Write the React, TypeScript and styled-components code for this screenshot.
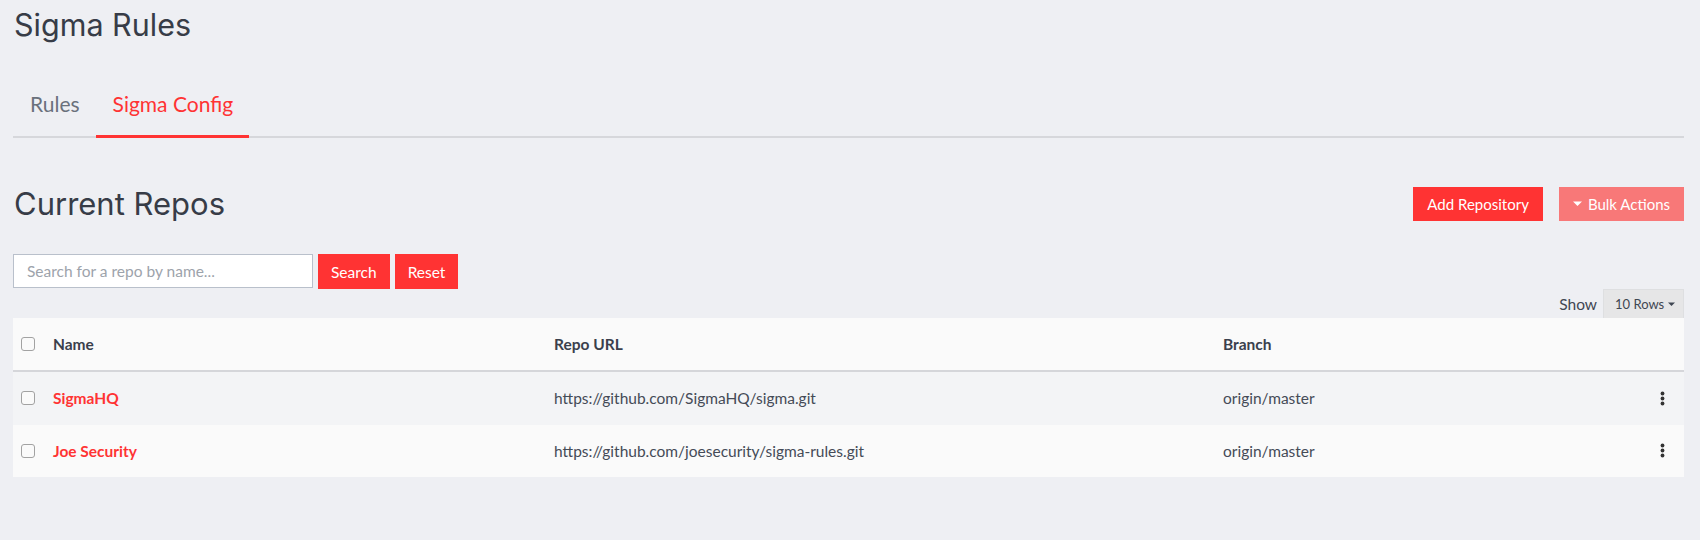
import React from "react";
import styled, { createGlobalStyle } from "styled-components";

const GlobalStyle = createGlobalStyle`
  html, body { margin: 0; padding: 0; background: #eeeff3; }
  body { font-family: "Lato", "Liberation Sans", sans-serif; color: #3f4652; }
  * { box-sizing: border-box; }
`;

const RED = "#ff3333";

const Page = styled.div`
  padding: 7px 16px 40px 13px;
`;

const Title = styled.h1`
  margin: 0;
  font-family: "Inter", "Liberation Sans", sans-serif;
  font-weight: 400;
  font-size: 30.5px;
  line-height: 36px;
  color: #373c47;
  padding-left: 1px;
`;

const TabBar = styled.nav`
  display: flex;
  margin-top: 33px;
  border-bottom: 2px solid #d6d7db;
`;

const Tab = styled.a<{ $active?: boolean }>`
  display: block;
  padding: 16px 16px 19px 17px;
  margin-bottom: -2px;
  font-size: 21px;
  line-height: 24px;
  color: ${(p) => (p.$active ? RED : "#6a717c")};
  border-bottom: 3px solid ${(p) => (p.$active ? RED : "transparent")};
  cursor: pointer;
`;

const SectionHead = styled.div`
  display: flex;
  align-items: center;
  margin-top: 49px;
  height: 34px;
`;

const SectionTitle = styled.h2`
  margin: 0;
  flex: 1;
  font-family: "Inter", "Liberation Sans", sans-serif;
  font-weight: 400;
  font-size: 31px;
  line-height: 34px;
  color: #373c47;
  padding-left: 1px;
`;

const Actions = styled.div`
  display: flex;
  gap: 16px;
`;

const Button = styled.button<{ $muted?: boolean }>`
  display: inline-flex;
  align-items: center;
  justify-content: center;
  gap: 6px;
  height: 34px;
  padding: 0 14px;
  border: none;
  border-radius: 0;
  background: ${(p) => (p.$muted ? "#f87878" : RED)};
  color: #fff;
  font-family: "Lato", "Liberation Sans", sans-serif;
  font-size: 15px;
  cursor: pointer;
`;

const SearchRow = styled.div`
  display: flex;
  align-items: flex-start;
  gap: 5px;
  margin-top: 33px;
`;

const SearchInput = styled.input`
  width: 300px;
  height: 34px;
  padding: 0 13px;
  border: 1px solid #b9c0cb;
  border-radius: 0;
  background: #fff;
  font-family: "Lato", "Liberation Sans", sans-serif;
  font-size: 15.5px;
  color: #3f4652;
  outline: none;
  &::placeholder { color: #9da3ab; }
`;

const SearchButton = styled(Button)`
  height: 35px;
  font-size: 15.5px;
  padding: 0 13px;
`;

const ShowRow = styled.div`
  display: flex;
  justify-content: flex-end;
  align-items: center;
  gap: 6px;
  height: 29px;
`;

const ShowLabel = styled.span`
  font-size: 15.5px;
  color: #3f4652;
`;

const RowsSelect = styled.div`
  display: inline-flex;
  align-items: center;
  gap: 4px;
  width: 81px;
  height: 29px;
  padding-left: 11px;
  background: #e6e6e7;
  border: 1px solid #dedfe1;
  border-bottom: none;
  font-size: 13px;
  color: #3f4652;
`;

const Table = styled.div`
  display: grid;
  grid-template-columns: 40px 501px 669px 1fr 44px;
`;

const HeadRow = styled.div`
  display: contents;
  & > div {
    height: 54px;
    background: #fafafa;
    border-bottom: 2px solid #d5d6da;
    font-weight: 700;
    color: #3a404c;
  }
`;

const BodyRow = styled.div<{ $stripe?: boolean }>`
  display: contents;
  & > div {
    height: 52.5px;
    background: ${(p) => (p.$stripe ? "#f3f4f6" : "#fafafa")};
  }
`;

const Cell = styled.div`
  display: flex;
  align-items: center;
  font-size: 15.5px;
  color: #454b57;
  white-space: nowrap;
`;

const CheckCell = styled(Cell)`
  padding-left: 8px;
`;

const MenuCell = styled(Cell)`
  justify-content: center;
  color: #333;
`;

const Check = styled.span`
  display: inline-block;
  width: 14px;
  height: 14px;
  border: 1.5px solid #a2a2a2;
  border-radius: 3px;
  background: #fafafa;
`;

const RepoName = styled.a`
  color: ${RED};
  font-weight: 700;
  cursor: pointer;
`;

const Caret = ({ color, w = 9 }: { color: string; w?: number }) => (
  <svg width={w} height={w / 2 + 1} viewBox="0 0 10 6" aria-hidden>
    <path d="M0 0.5 L10 0.5 L5 5.5 Z" fill={color} />
  </svg>
);

const Kebab = () => (
  <svg width="5" height="15" viewBox="0 0 5 15" aria-hidden>
    <circle cx="2.5" cy="2.5" r="1.9" fill="#333" />
    <circle cx="2.5" cy="7.5" r="1.9" fill="#333" />
    <circle cx="2.5" cy="12.5" r="1.9" fill="#333" />
  </svg>
);

const repos = [
  { name: "SigmaHQ", url: "https://github.com/SigmaHQ/sigma.git", branch: "origin/master" },
  { name: "Joe Security", url: "https://github.com/joesecurity/sigma-rules.git", branch: "origin/master" },
];

export default function App() {
  return (
    <>
      <GlobalStyle />
      <Page>
        <Title>Sigma Rules</Title>
        <TabBar>
          <Tab>Rules</Tab>
          <Tab $active>Sigma Config</Tab>
        </TabBar>

        <SectionHead>
          <SectionTitle>Current Repos</SectionTitle>
          <Actions>
            <Button>Add Repository</Button>
            <Button $muted>
              <Caret color="#fff" />
              Bulk Actions
            </Button>
          </Actions>
        </SectionHead>

        <SearchRow>
          <SearchInput placeholder="Search for a repo by name..." />
          <SearchButton>Search</SearchButton>
          <SearchButton>Reset</SearchButton>
        </SearchRow>

        <ShowRow>
          <ShowLabel>Show</ShowLabel>
          <RowsSelect>
            10 Rows <Caret color="#3f4652" w={7} />
          </RowsSelect>
        </ShowRow>

        <Table>
          <HeadRow>
            <CheckCell><Check /></CheckCell>
            <Cell>Name</Cell>
            <Cell>Repo URL</Cell>
            <Cell>Branch</Cell>
            <Cell />
          </HeadRow>
          {repos.map((r, i) => (
            <BodyRow key={r.name} $stripe={i % 2 === 0}>
              <CheckCell><Check /></CheckCell>
              <Cell><RepoName>{r.name}</RepoName></Cell>
              <Cell>{r.url}</Cell>
              <Cell>{r.branch}</Cell>
              <MenuCell><Kebab /></MenuCell>
            </BodyRow>
          ))}
        </Table>
      </Page>
    </>
  );
}
